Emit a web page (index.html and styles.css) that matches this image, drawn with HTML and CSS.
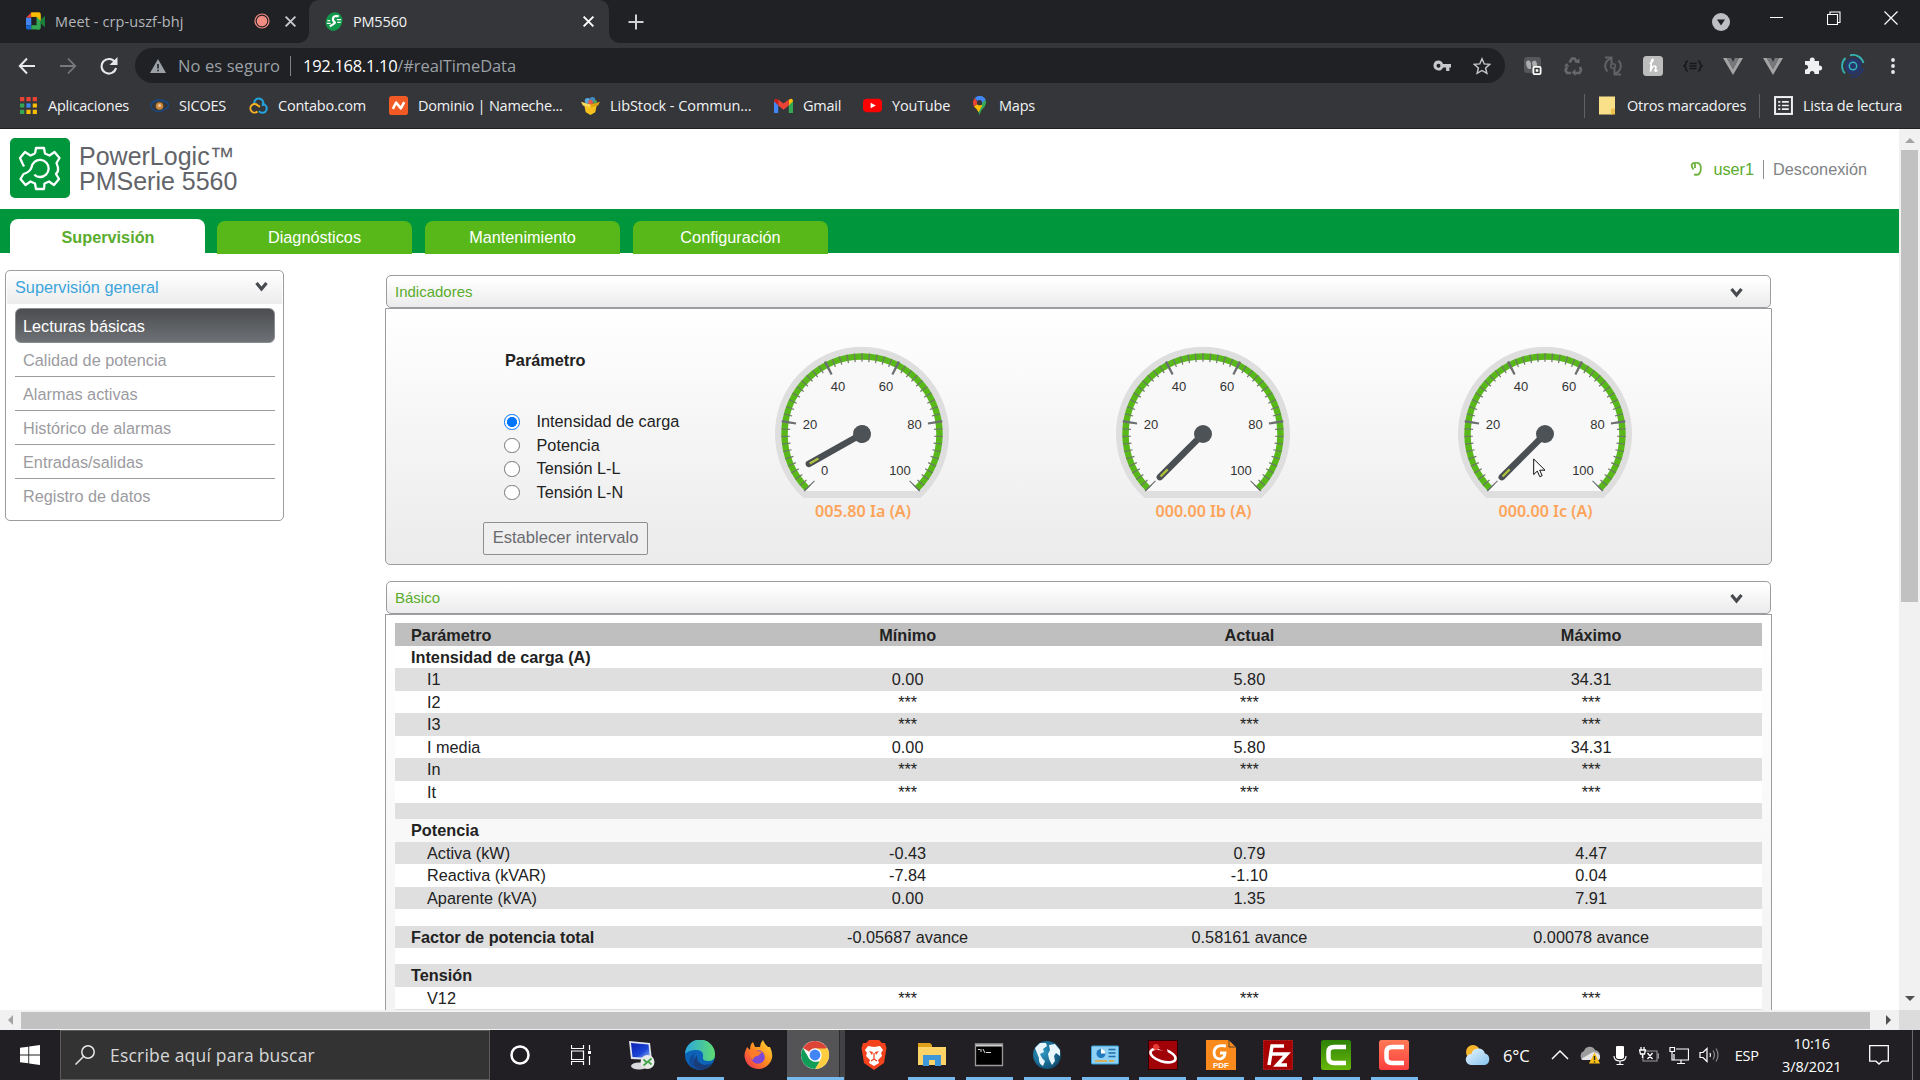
FILE: index.html
```html
<!DOCTYPE html>
<html lang="es">
<head>
<meta charset="utf-8">
<title>PM5560</title>
<link rel="stylesheet" href="styles.css">
</head>
<body>
<svg class="defs" aria-hidden="true">
  <defs>
    <linearGradient id="edgeA" x1="0" y1="0" x2="1" y2="0"><stop offset="0" stop-color="#2aa5e0"/><stop offset="1" stop-color="#5fdc70"/></linearGradient>
    <linearGradient id="fire" x1="1" y1="0" x2="0" y2="1"><stop offset="0" stop-color="#ffe23a"/><stop offset=".5" stop-color="#ff8a1e"/><stop offset="1" stop-color="#f0285a"/></linearGradient>
    <linearGradient id="cloudG" x1="0" y1="0" x2="1" y2="1"><stop offset="0" stop-color="#e8f5ff"/><stop offset="1" stop-color="#86c3ee"/></linearGradient>
    <radialGradient id="globeG" cx=".35" cy=".4" r=".8"><stop offset="0" stop-color="#2d9ac4"/><stop offset="1" stop-color="#0a3f63"/></radialGradient>
    <linearGradient id="camG" x1="0" y1="0" x2="0" y2="1"><stop offset="0" stop-color="#2e8207"/><stop offset="1" stop-color="#68b80a"/></linearGradient>
    <linearGradient id="camR" x1="0" y1="0" x2="0" y2="1"><stop offset="0" stop-color="#ff7a55"/><stop offset="1" stop-color="#fb3f3f"/></linearGradient>
    <linearGradient id="screenG" x1="0" y1="0" x2="1" y2="1"><stop offset="0" stop-color="#0a1fb0"/><stop offset=".6" stop-color="#1a46d8"/><stop offset="1" stop-color="#9db8f5"/></linearGradient>
    <symbol id="dial" viewBox="-90 -90 180 160" overflow="visible">
      <path d="M-58.500 63.500 H58.500 A86.500 86.500 0 1 0 -58.500 63.500 Z" fill="#dedede" stroke="#dedede" stroke-width="1"/>
      <path d="M-57 57 A80.500 80.500 0 1 1 57 57 Z" fill="#f8f8f8"/>
      <path d="M-54.800 54.800 A77.500 77.500 0 1 1 54.800 54.800" fill="none" stroke="#58b81a" stroke-width="6.500"/>
      <path d="M-54 54 A76.400 76.400 0 1 1 54 54" pathLength="50" fill="none" stroke="#6f7a68" stroke-width="8.500" stroke-dasharray=".18 .82" stroke-dashoffset=".09"/>
      <path d="M-52.300 52.300 A74 74 0 1 1 52.300 52.300" pathLength="500" fill="none" stroke="#6d7072" stroke-width="14.500" stroke-dasharray="3.400 96.600" stroke-dashoffset="1.700"/>
      <g class="dial-num">
        <text x="-24" y="-43.500">40</text><text x="24" y="-43.500">60</text>
        <text x="-52" y="-5">20</text><text x="52.500" y="-5">80</text>
        <text x="38" y="41">100</text>
      </g>
    </symbol>
    <symbol id="needle" viewBox="-90 -90 180 160" overflow="visible">
      <path d="M0 0 V61" stroke="#4a4f54" stroke-width="6.500" stroke-linecap="round"/>
      <path d="M0 50 V60" stroke="#b0c43c" stroke-width="2.200"/>
      <circle r="9" fill="#4d5257"/>
    </symbol>
    <symbol id="chev" viewBox="0 0 14 10"><path d="M2 1 L7 7 L12 1" fill="none" stroke="#474a4f" stroke-width="3.200"/></symbol>
  </defs>
</svg>

<header class="chrome">
  <div class="tabstrip">
    <div class="tab">
      <svg class="fav" viewBox="0 0 19 17"><path d="M5 0h8v4H5z" fill="#fbbc04"/><path d="M5 0v5H0z" fill="#ea4335"/><path d="M0 5h5v7H0z" fill="#4285f4"/><path d="M0 12h5v4H1.500Q0 16 0 14.500z" fill="#1967d2"/><path d="M5 12h8v4H5z" fill="#34a853"/><path d="M10 2h2.500Q14 2 14 3.500v11Q14 16 12.500 16H10z" fill="#34a853"/><path d="M5 0h7.500Q14 0 14 1.500V8l-4-4H5z" fill="#fbbc04"/><path d="M14 6.500 18 3v11l-4-3.500z" fill="#188038"/></svg>
      <span class="tab-title muted">Meet - crp-uszf-bhj</span>
      <svg class="rec" viewBox="0 0 16 16"><circle cx="8" cy="8" r="7" fill="none" stroke="#f28b82" stroke-width="1.200"/><circle cx="8" cy="8" r="5.300" fill="#f28b82"/></svg>
      <svg class="x" viewBox="0 0 12 12"><path d="M1.500 1.500l9 9M10.500 1.500l-9 9" stroke="#c4c7cb" stroke-width="1.800"/></svg>
    </div>
    <div class="tab active">
      <svg class="fav" viewBox="0 0 20 20"><ellipse cx="10" cy="10" rx="8.600" ry="10" transform="rotate(24 10 10)" fill="#12984a"/><path d="M15 4.500Q9.500 3.500 9 6.500T10.500 10.500 5.500 15" fill="none" stroke="#fff" stroke-width="2.300"/><path d="M17.500 8H13M17 11h-3.500M3 9h3M2.500 12h4" fill="none" stroke="#fff" stroke-width="1.400"/></svg>
      <span class="tab-title">PM5560</span>
      <svg class="x" viewBox="0 0 12 12"><path d="M1.500 1.500l9 9M10.500 1.500l-9 9" stroke="#fff" stroke-width="1.800"/></svg>
    </div>
    <svg class="plus" viewBox="0 0 16 16"><path d="M8 .5v15M.5 8h15" stroke="#d0d2d5" stroke-width="2"/></svg>
    <div class="win">
      <svg viewBox="0 0 18 18" width="18" height="18"><circle cx="9" cy="9" r="9" fill="#bcbec4"/><path d="M5 6.500h8L9 12.500z" fill="#202124"/></svg>
      <svg viewBox="0 0 14 14" width="14" height="14"><path d="M0 6.500h13" stroke="#fff" stroke-width="1"/></svg>
      <svg viewBox="0 0 14 14" width="14" height="14"><path d="M.5 3.500h10v10H.5zM3 3.500V1h10v10.500h-2.500" fill="none" stroke="#fff" stroke-width="1.100"/></svg>
      <svg viewBox="0 0 14 14" width="14" height="14"><path d="M.5.5l13 13M13.500.5l-13 13" stroke="#fff" stroke-width="1.200"/></svg>
    </div>
  </div>
  <div class="toolbar">
    <div class="nav">
      <svg viewBox="0 0 18 18" width="18" height="18"><path d="M17 9H2M9 1.500 1.800 9 9 16.500" fill="none" stroke="#e6e8eb" stroke-width="2"/></svg>
      <svg viewBox="0 0 18 18" width="18" height="18"><path d="M1 9h15M9 1.500 16.200 9 9 16.500" fill="none" stroke="#77797d" stroke-width="1.800"/></svg>
      <svg viewBox="0 0 18 18" width="18" height="18"><path d="M15 5.200A7.300 7.300 0 1 0 16 11" fill="none" stroke="#e6e8eb" stroke-width="2.100"/><path d="M17.500 0v8h-8z" fill="#e6e8eb"/></svg>
    </div>
    <div class="omni">
      <svg viewBox="0 0 16 14" width="16" height="14"><path d="M8 0l8 14H0z" fill="#9aa0a6"/><path d="M8 5v4.500M8 10.700v1.600" stroke="#202124" stroke-width="1.600"/></svg>
      <span class="unsafe">No es seguro</span>
      <span class="url"><b>192.168.1.10</b>/#realTimeData</span>
      <svg class="key" viewBox="0 0 18 12" width="18" height="12"><path d="M5.500.5a5 5 0 1 0 4.600 7h3v3.500h3.300V7.500H18V4H10A5 5 0 0 0 5.500.5zm0 3.200a2 2 0 1 1 0 4 2 2 0 0 1 0-4z" fill="#c6c8cc" fill-rule="evenodd"/></svg>
      <svg viewBox="0 0 20 19" width="18" height="18"><path d="M10 1.500l2.500 5.700 6.200.5-4.700 4 1.400 6L10 14.500 4.600 17.700l1.400-6-4.700-4 6.200-.5z" fill="none" stroke="#c6c8cc" stroke-width="1.600"/></svg>
    </div>
    <div class="exts">
      <svg viewBox="0 0 20 20"><rect x="1" y="1" width="17" height="16" rx="3" fill="#55575b"/><path d="M3 6q3-4 5 1v6q-5 1-5-7M9 6q4-4 5 2v5q-5 0-5-7" fill="#a9abad"/><rect x="9.500" y="10" width="9" height="9" rx="2" fill="#fff"/><path d="M12 12.500h4v4h-4z" fill="none" stroke="#333" stroke-width="1.400"/></svg>
      <svg viewBox="0 0 20 20"><g fill="none" stroke="#66686b" stroke-width="2.600"><path d="M6.500 6.500 9 2.500h2.500L14 6M17 11l1 3-1.500 3H12M8 17H4L2.500 14.500 4 11"/></g><path d="M11 6l5.500 1.500V2.500zM12.500 13v7l-4-3.500zM1 10.500h5.500l-3-3.500z" fill="#66686b"/></svg>
      <svg viewBox="0 0 20 20"><path d="M8 2.500a7.800 7.800 0 0 0-3.500 13M2 1.500h6.500v6M12 17.500a7.800 7.800 0 0 0 3.500-13M18 18.500h-6.500v-6" fill="none" stroke="#606265" stroke-width="2"/><circle cx="10" cy="10" r="2.300" fill="none" stroke="#606265" stroke-width="1.500"/></svg>
      <svg viewBox="0 0 20 20"><rect width="20" height="20" rx="3.500" fill="#bdbdbe"/><path d="M6.500 7.500Q10.500 6 10 3.500 8.500 3 8.300 7L7.500 15.500Q9 10 11.500 10T12 14.500Q12.500 16 14.500 14" fill="none" stroke="#fff" stroke-width="1.700"/></svg>
      <svg viewBox="0 0 20 20"><path d="M5 5q-2 0-2 2t-2 3q2 1 2 3t2 2M15 5q2 0 2 2t2 3q-2 1-2 3t-2 2M6.500 7.500h7M6.500 10h7M6.500 12.500h7" fill="none" stroke="#17181a" stroke-width="1.600"/></svg>
      <svg viewBox="0 0 20 20"><path d="M0 2h4l6 11 6-11h4L10 19z" fill="#a3a3a4"/><path d="M4 2h4l2 4 2-4h4L10 13z" fill="#77787a"/></svg>
      <svg viewBox="0 0 20 20"><path d="M0 2h4l6 11 6-11h4L10 19z" fill="#a3a3a4"/><path d="M4 2h4l2 4 2-4h4L10 13z" fill="#77787a"/></svg>
      <svg viewBox="0 0 20 20"><path d="M2 5h5a2.500 2.500 0 1 1 4.500 0H16v4.500a2.500 2.500 0 1 1 0 4.800V18h-4.600a2.400 2.400 0 1 0-4.600 0H2v-4.500a2.400 2.400 0 1 0 0-4.600z" fill="#eef0f2"/></svg>
      <svg viewBox="0 0 24 24" class="profile"><path d="M16.500 4A9 9 0 0 1 20 14l-7.500-2M20 14A9 9 0 0 1 7 19l5-7" fill="#25356e"/><circle cx="12" cy="12" r="8" fill="#27366d"/><path d="M22 14A10.500 10.500 0 0 1 10 22.500" fill="none" stroke="#27366d" stroke-width="2"/><path d="M4 19.500A11 11 0 0 1 4.500 4M9 1.300A11 11 0 0 1 22.500 9" fill="none" stroke="#35b3b5" stroke-width="1.800"/><circle cx="12" cy="12" r="3.700" fill="none" stroke="#35b3b5" stroke-width="1.500"/></svg>
      <svg viewBox="0 0 20 20"><g fill="#e6e8eb"><circle cx="10" cy="4" r="1.900"/><circle cx="10" cy="10" r="1.900"/><circle cx="10" cy="16" r="1.900"/></g></svg>
    </div>
  </div>
  <nav class="bookmarks">
    <a class="bm bm-apps"><svg viewBox="0 0 18 18"><g><path d="M1 1h4v4H1zM7 1h4v4H7zM13 1h4v4h-4z" fill="#ea4335"/><path d="M1 7h4v4H1zM1 13h4v4H1z" fill="#34a853"/><path d="M7 7h4v4H7z" fill="#4285f4"/><path d="M13 7h4v4h-4zM7 13h4v4H7zM13 13h4v4h-4z" fill="#fbbc04"/></g></svg><span>Aplicaciones</span></a>
    <a class="bm bm-sic"><svg viewBox="0 0 18 18"><path d="M0 10Q3 3 10 4t8 5" fill="none" stroke="#174a86" stroke-width="1.700"/><path d="M1 11q4 5 10 3t7-5" fill="none" stroke="#174a86" stroke-width="1.300"/><circle cx="9" cy="9.500" r="3.600" fill="#c8843a"/><circle cx="9" cy="9" r="1.500" fill="#e9c9a0"/></svg><span>SICOES</span></a>
    <a class="bm bm-con"><svg viewBox="0 0 20 18"><path d="M5.500 7a4.800 4.800 0 1 1 8.500 2.500M13.500 7.500a4.600 4.600 0 1 1-3 7.500" fill="none" stroke="#22a5df" stroke-width="2.100"/><path d="M9 8.700A4.500 4.500 0 1 0 9 15.300M8.500 8.500l3 2" fill="none" stroke="#f7b322" stroke-width="2.100"/></svg><span>Contabo.com</span></a>
    <a class="bm bm-dom"><svg viewBox="0 0 20 20"><rect width="20" height="20" rx="3" fill="#f15a24"/><path d="M4 13.500 7.500 7l5 6L16 6.500" fill="none" stroke="#fff" stroke-width="2.600" stroke-linejoin="round"/></svg><span>Dominio | Nameche...</span></a>
    <a class="bm bm-lib"><svg viewBox="0 0 20 20"><path d="M3 8h14l-2 9-5 3-5-3z" fill="#f6c11c"/><path d="M0 6l10 3v3L2 10z" fill="#ffd95a"/><path d="M20 6L10 9v3l8-2z" fill="#e0a312"/><circle cx="7" cy="5" r="3" fill="#58a9dc"/><circle cx="12" cy="4" r="3" fill="#3f8dc0"/><circle cx="10" cy="6.500" r="2.500" fill="#e35b48"/><circle cx="15" cy="6" r="1.800" fill="#54a656"/></svg><span>LibStock - Commun...</span></a>
    <a class="bm bm-gm"><svg viewBox="0 0 18 14"><path d="M0 2v12h4V5z" fill="#4285f4"/><path d="M18 2v12h-4V5z" fill="#34a853"/><path d="M14 1.500Q18-1 18 3L14 7z" fill="#fbbc04"/><path d="M4 1.500Q0-1 0 3l4 4z" fill="#c5221f"/><path d="M4 1.300 9 5.200l5-3.900V7l-5 4-5-4z" fill="#ea4335"/></svg><span>Gmail</span></a>
    <a class="bm bm-yt"><svg viewBox="0 0 20 14"><rect width="20" height="14" rx="4" fill="#f00"/><path d="M8 4l5.500 3L8 10z" fill="#fff"/></svg><span>YouTube</span></a>
    <a class="bm bm-map"><svg viewBox="0 0 14 20"><path d="M7 0a7 7 0 0 1 6.800 8Q13 12 9 15L7 20 5 14.500 9 9z" fill="#34a853"/><path d="M1 11q4 3 5 6l4-7-5-2z" fill="#fbbc04"/><path d="M.2 6Q0 9 1 11l5-3L2 2Q.6 3.600.2 6z" fill="#ea4335"/><path d="M2 2a7 7 0 0 1 11.500 2L8 9z" fill="#4285f4"/><circle cx="7" cy="7" r="2.700" fill="#35363a"/></svg><span>Maps</span></a>
    <a class="bm bm-right bm-ot"><svg viewBox="0 0 16 18"><path d="M0 0h16v13l-3 5H0z" fill="#fbe08a"/><path d="M12 12h4v6h-4z" fill="#efc24c"/></svg><span>Otros marcadores</span></a>
    <a class="bm bm-right bm-li"><svg viewBox="0 0 18 18"><rect x="1" y="1" width="16" height="16" fill="none" stroke="#eef0f2" stroke-width="1.900"/><path d="M4 5.500h2M4 9h2M4 12.500h2M7.500 5.500H14M7.500 9H14M7.500 12.500H14" stroke="#eef0f2" stroke-width="1.600"/></svg><span>Lista de lectura</span></a>
  </nav>
</header>

<div class="viewport">
  <div class="page">
    <div class="brand">
      <svg class="logo" viewBox="0 0 60 60"><rect width="60" height="60" rx="5" fill="#00963c"/><path d="M25 15.500 26 10h8l1 5.500 4.500 2 5-3.500 5 6-3 5 1.500 4.500V33l-2 3 3 5-5 6-5-3.500-4.500 2L34 51h-8l-1-5.500-4.500-2-5 3.500-5-6 3-5Q20 34 21.500 29.500A8.600 8.600 0 1 1 30 39Q26 39 24.500 36.500M14 28.500l-1.500-3L10 20l5-6 5.500 3.500 4.500-2" fill="none" stroke="#fff" stroke-width="2.300" stroke-linejoin="round"/></svg>
      <div class="brand-name">PowerLogic™<br>PMSerie 5560</div>
      <div class="session">
        <svg viewBox="0 0 12 14" width="12" height="14"><path d="M3.500 7.500Q0 3 3 1.200 9-.5 10.500 3.500 11.500 9 9.500 11.500 7.500 13.500 4 12.300M5 1.500V6" fill="none" stroke="#6db33f" stroke-width="1.800"/></svg>
        <span class="user">user1</span><span class="logout">Desconexión</span>
      </div>
    </div>
    <nav class="tabs"><a class="on">Supervisión</a><a>Diagnósticos</a><a>Mantenimiento</a><a>Configuración</a></nav>
    <div class="content">
      <aside class="side">
        <h2>Supervisión general <svg width="15" height="10"><use href="#chev"/></svg></h2>
        <ul><li class="sel">Lecturas básicas</li><li>Calidad de potencia</li><li>Alarmas activas</li><li>Histórico de alarmas</li><li>Entradas/salidas</li><li>Registro de datos</li></ul>
      </aside>
      <main class="main">
        <h3 class="ph">Indicadores <svg width="15" height="10"><use href="#chev"/></svg></h3>
        <section class="gauges">
          <form class="params">
            <strong>Parámetro</strong>
            <label><i class="radio checked"></i>Intensidad de carga</label>
            <label><i class="radio"></i>Potencia</label>
            <label><i class="radio"></i>Tensión L-L</label>
            <label><i class="radio"></i>Tensión L-N</label>
            <button type="button">Establecer intervalo</button>
          </form>
          <svg class="gauge" viewBox="-90 -90 180 180"><use href="#dial" x="-90" y="-90" width="180" height="160"/><text class="dial-num" x="-37.500" y="41">0</text><g transform="rotate(60.600)"><use href="#needle" x="-90" y="-90" width="180" height="160"/></g><text class="val" x="1" y="83" textLength="96" lengthAdjust="spacingAndGlyphs">005.80 Ia (A)</text></svg>
          <svg class="gauge" viewBox="-90 -90 180 180"><use href="#dial" x="-90" y="-90" width="180" height="160"/><g transform="rotate(45)"><use href="#needle" x="-90" y="-90" width="180" height="160"/></g><text class="val" x=".5" y="83" textLength="96" lengthAdjust="spacingAndGlyphs">000.00 Ib (A)</text></svg>
          <svg class="gauge" viewBox="-90 -90 180 180"><use href="#dial" x="-90" y="-90" width="180" height="160"/><g transform="rotate(45)"><use href="#needle" x="-90" y="-90" width="180" height="160"/></g><text class="val" x=".5" y="83" textLength="94" lengthAdjust="spacingAndGlyphs">000.00 Ic (A)</text></svg>
        </section>
        <h3 class="ph second">Básico <svg width="15" height="10"><use href="#chev"/></svg></h3>
        <section class="basic">
          <div class="table">
            <div class="row head"><b>Parámetro</b><b>Mínimo</b><b>Actual</b><b>Máximo</b></div>
            <div class="row"><b>Intensidad de carga (A)</b></div>
            <div class="row g"><span>I1</span><span>0.00</span><span>5.80</span><span>34.31</span></div>
            <div class="row"><span>I2</span><span>***</span><span>***</span><span>***</span></div>
            <div class="row g"><span>I3</span><span>***</span><span>***</span><span>***</span></div>
            <div class="row"><span>I media</span><span>0.00</span><span>5.80</span><span>34.31</span></div>
            <div class="row g"><span>In</span><span>***</span><span>***</span><span>***</span></div>
            <div class="row"><span>It</span><span>***</span><span>***</span><span>***</span></div>
            <div class="row gap g"></div>
            <div class="row pale"><b>Potencia</b></div>
            <div class="row g"><span>Activa (kW)</span><span>-0.43</span><span>0.79</span><span>4.47</span></div>
            <div class="row"><span>Reactiva (kVAR)</span><span>-7.84</span><span>-1.10</span><span>0.04</span></div>
            <div class="row g"><span>Aparente (kVA)</span><span>0.00</span><span>1.35</span><span>7.91</span></div>
            <div class="row gap"></div>
            <div class="row g"><b>Factor de potencia total</b><span>-0.05687 avance</span><span>0.58161 avance</span><span>0.00078 avance</span></div>
            <div class="row gap"></div>
            <div class="row g"><b>Tensión</b></div>
            <div class="row"><span>V12</span><span>***</span><span>***</span><span>***</span></div>
            <div class="row g"></div>
          </div>
        </section>
      </main>
    </div>
  </div>
  <div class="vbar"><i class="up"></i><div class="vthumb"></div><i class="down"></i></div>
  <div class="hbar"><i class="left"></i><div class="hthumb"></div><i class="right"></i></div>
  <div class="corner"></div>
</div>

<footer class="taskbar">
  <div class="start"><svg viewBox="0 0 20 20" width="20" height="20"><path d="M0 2.800 8.300 1.700v7.800H0zM9.200 1.500 20 0v9.500H9.200zM0 10.400h8.300v7.900L0 17.200zM9.200 10.400H20V20L9.200 18.500z" fill="#fff"/></svg></div>
  <div class="search"><svg viewBox="0 0 20 20" width="20" height="20"><circle cx="13" cy="7" r="6.200" fill="none" stroke="#e8e8e8" stroke-width="1.500"/><path d="M8.500 11.500.5 19.500" stroke="#e8e8e8" stroke-width="1.500"/></svg><span>Escribe aquí para buscar</span></div>
  <div class="apps">
    <div class="app wide"><svg viewBox="0 0 20 20" width="20" height="20"><circle cx="10" cy="10" r="8.500" fill="none" stroke="#fff" stroke-width="2.500"/></svg></div>
    <div class="app wide"><svg viewBox="0 0 20 20" width="20" height="20"><path d="M.5 0v3.500h12V0M.5 20v-3.500h12V20M.5 6h12v8.500H.5zM18.500 0v5M18.500 11v9" fill="none" stroke="#fff" stroke-width="1.200"/><path d="M17 6h3v3h-3z" fill="#fff"/></svg></div>
    <div class="app wide"><svg viewBox="0 0 30 30"><path d="M3 1l21 2 2 17L5 19z" fill="#dfe6f2"/><path d="M5 3l17.500 1.500L24 18 6.500 17z" fill="url(#screenG)"/><ellipse cx="13" cy="26" rx="8" ry="3.500" fill="#d8dadd"/><circle cx="21.500" cy="22" r="7" fill="#e8eae8"/><path d="M17.500 19.500l3.500 3-3.500 3M25.500 18.500l-3.500 3 3.500 3" fill="none" stroke="#3fa447" stroke-width="1.700"/></svg></div>
    <div class="app run"><svg viewBox="0 0 30 30"><circle cx="15" cy="15" r="15" fill="#0c63b8"/><path d="M0 14A15 15 0 0 1 30 15q0 6-7 6-6 0-5-4 1-7-7-7Q4 10 0 14z" fill="url(#edgeA)"/><path d="M10 13q-3 6 1.500 11T24 26.500Q19 30 13 29.800 2 27 5 17z" fill="#134b9a"/><path d="M12 15q-1 8 7 10 5 0 8-2-7 9-14 6-8-5-1-14z" fill="#1a3c78"/></svg></div>
    <div class="app"><svg viewBox="0 0 30 30"><path d="M15 29A13.500 13.500 0 0 1 2 12L4 7l3 3q0-6 3-8l2 5 5 0Q17 3 20 0q2 5 5 7l2 0q3 6 2 11a14 14 0 0 1-14 11z" fill="url(#fire)"/><circle cx="15" cy="17" r="6.800" fill="#7c48d6"/><path d="M7 10q4-2 8 1l4 1-4 4q-4 0-5 4-5-5-3-10z" fill="#ff7a29"/></svg></div>
    <div class="app run current"><svg viewBox="0 0 30 30"><circle cx="15" cy="15" r="14" fill="#fff"/><path d="M15 15 2.900 8A14 14 0 0 1 27.100 8z" fill="#db4437"/><path d="M27.500 8.500A14 14 0 0 1 15 29l6-10.500L15 8.500z" fill="#ffcd40"/><path d="M2.900 8l6.500 11L15 21.500h4.500L15 29A14 14 0 0 1 2.900 8z" fill="#0f9d58"/><circle cx="15" cy="15" r="6.700" fill="#fff"/><circle cx="15" cy="15" r="5.400" fill="#4285f4"/></svg></div>
    <div class="app"><svg viewBox="0 0 26 30" width="26" height="30"><path d="M5 3 8 0h10l3 3 3 0 1.500 5-2.500 15-10 7-10-7L.5 8 2 3z" fill="#f4421c"/><path d="M7 6l6 1 6-1 3 4-2 3 1 3-4 4 1 3-5 3-5-3 1-3-4-4 1-3-2-3z" fill="#fff"/><path d="M8 11l4 1-1 3zM18 11l-4 1 1 3z" fill="#f4421c"/><path d="M13 13v6M10 21l3-2 3 2" fill="none" stroke="#f4421c" stroke-width="1.200"/></svg></div>
    <div class="app run"><svg viewBox="0 0 30 30"><path d="M1 3h12l2 2v5H1z" fill="#dda01b"/><path d="M1 7h28v18H1z" fill="#fbd367"/><path d="M6 26V15h18v11h-6v-6h-6v6z" fill="#3e97d8"/></svg></div>
    <div class="app run"><svg viewBox="0 0 30 30"><path d="M1.500 4h27v21.500h-27z" fill="#000" stroke="#9a9a9a" stroke-width="1.300"/><path d="M2 4.500h26v2H2z" fill="#cfcfcf"/><path d="M4 9.500h2M7 9v3M9 9l2 4M12 12.500h5" stroke="#ddd" stroke-width="1"/></svg></div>
    <div class="app run"><svg viewBox="0 0 30 30"><circle cx="15" cy="15" r="14" fill="url(#globeG)"/><path d="M3 8l5-5 6 0 1 3-4 3 1 3-4 2 2 4 3 3-2 5q-5-3-4-8zM17 5l6-1 5 6 0 6-4-3-2 3 1 5-3 4-3-6-1-5 2-4z" fill="#e8f6fb"/></svg></div>
    <div class="app run"><svg viewBox="0 0 30 30"><rect x="1.500" y="6" width="27" height="18" rx="1" fill="#8fd0f5" stroke="#37a0da"/><circle cx="11" cy="13.500" r="4.500" fill="#2379be"/><path d="M11 13.500V9a4.500 4.500 0 0 1 4.500 4.500z" fill="#fff"/><path d="M18.500 9.500h7M18.500 13h7M18.500 16.500h7" stroke="#1d6ead" stroke-width="1.700"/><path d="M5 21h12M19 21h5" stroke="#eaa52e" stroke-width="1.300"/></svg></div>
    <div class="app run"><svg viewBox="0 0 30 30"><path d="M.5.5h29v29H.5z" fill="#a00208" stroke="#2d0002"/><ellipse cx="15" cy="15.500" rx="13" ry="6" transform="rotate(17 15 15.500)" fill="none" stroke="#fff" stroke-width="2.600"/><path d="M8 8l12 5-2-7z" fill="#a00208"/><circle cx="8" cy="7" r="3" fill="#ea3b35"/></svg></div>
    <div class="app run"><svg viewBox="0 0 30 30"><path d="M0 0h22l8 7v23H0z" fill="#fb8a1c"/><path d="M23 0v7h7z" fill="#fb8a1c" stroke="#333" stroke-width=".8"/><path d="M20 6Q9 4 8 12q0 7 6 7 5-1 5-6h-5" fill="none" stroke="#fff" stroke-width="2.800"/><text x="15" y="27.500" class="pdf">PDF</text></svg></div>
    <div class="app run"><svg viewBox="0 0 30 30"><path d="M.5.500h29v29H.5z" fill="#a80000" stroke="#c42020" stroke-dasharray="2 1"/><path d="M6 25 9 6h12M8 14h8M14 14h10L14 25h10" fill="none" stroke="#fff" stroke-width="3.500"/></svg></div>
    <div class="app run"><svg viewBox="0 0 30 30"><rect width="30" height="30" rx="2.500" fill="url(#camG)"/><path d="M25 7H13Q7.500 7 7.500 12v6q0 5 5.500 5h12" fill="none" stroke="#fff" stroke-width="4.500"/></svg></div>
    <div class="app run"><svg viewBox="0 0 30 30"><rect width="30" height="30" rx="2.500" fill="url(#camR)"/><path d="M25 7H13Q7.500 7 7.500 12v6q0 5 5.500 5h12" fill="none" stroke="#fff" stroke-width="4.500"/></svg></div>
  </div>
  <div class="tray">
    <svg class="weather" viewBox="0 0 26 20"><circle cx="8" cy="7" r="7" fill="#f8b62c"/><path d="M6 20a5.500 5.500 0 0 1 .5-11A7 7 0 0 1 20 8.500 6 6 0 0 1 20 20z" fill="url(#cloudG)"/></svg>
    <span class="temp">6°C</span>
    <svg class="t" viewBox="0 0 20 20"><path d="M2 14l8-8 8 8" fill="none" stroke="#fff" stroke-width="1.500"/></svg>
    <svg class="t" viewBox="0 0 20 20"><path d="M3 15a5 5 0 0 1 1-9 6 6 0 0 1 11-1q5 1 5 6l-3 4z" fill="#9d9d9d"/><path d="M1 14 13 7q7 1 7 5t-4 3H3z" fill="#e6e6e6"/><path d="M14.500 7.500 20 18.500H9z" fill="#fcbf16"/><path d="M14.500 11v4M14.500 16.200v1.300" stroke="#222" stroke-width="1.400"/></svg>
    <svg class="t" viewBox="0 0 20 20"><path d="M6 2q0-1 1-1h6q1 0 1 1v10q0 2-4 2t-4-2z" fill="#fff"/><path d="M4 11q0 5 6 5t6-5M10 16v3M6.500 19.500h7" fill="none" stroke="#fff" stroke-width="1.200"/></svg>
    <svg class="t" viewBox="0 0 20 20"><path d="M5 6h13v10H4v-6M18.500 9h1v4h-1" fill="none" stroke="#999" stroke-width="1.100"/><path d="M2 2v3M5 2v3M.5 5h6l-1 4h-4zM3.500 9v4M8.500 8l5 6M13.500 8l-5 6" fill="none" stroke="#fff" stroke-width="1.300"/></svg>
    <svg class="t" viewBox="0 0 20 20"><path d="M7 4h12.500v11H5V9M12 15v3M8 18.500h8M1 2.500h4.500v4H1zM3 6.500V15h2" fill="none" stroke="#fff" stroke-width="1.200"/></svg>
    <svg class="t" viewBox="0 0 20 20"><path d="M1 7.500h3l4-4v13l-4-4H1z" fill="none" stroke="#fff" stroke-width="1.200"/><path d="M11 8q1 2 0 4" fill="none" stroke="#fff" stroke-width="1.200"/><path d="M14 5.500q3 4.500 0 9M17 3.500q4 6.500 0 13" fill="none" stroke="#888" stroke-width="1.200"/></svg>
    <span class="lang">ESP</span>
    <span class="clock">10:16<br>3/8/2021</span>
    <svg class="note" viewBox="0 0 20 20" width="20" height="20"><path d="M.7.700h18.600v15.500H13L10 19l-3-2.800H.7z" fill="none" stroke="#fff" stroke-width="1.300"/></svg>
  </div>
</footer>
<svg class="cursor" viewBox="0 0 13 20" width="13" height="20"><path d="M.7 1v15.500l3.600-3.400 2.500 5.600 2.400-1-2.500-5.500H12z" fill="#fff" stroke="#111" stroke-width="1"/></svg>
</body>
</html>
```
FILE: styles.css
```css
* { box-sizing: border-box; }
html, body { margin: 0; height: 1080px; overflow: hidden; }
body { display: flex; flex-direction: column; width: 1920px; background: #fff; font: 16.25px "Liberation Sans", Arial, sans-serif; color: #222; position: relative; }
svg { display: block; flex: none; }
.defs { position: absolute; width: 0; height: 0; }

/* Browser frame */
.chrome { height: 129px; flex: none; background: #35363a; border-bottom: 1px solid #202124; font-family: "Open Sans", "Noto Sans", sans-serif; color: #f1f3f4; }
.tabstrip { height: 43px; background: #202124; display: flex; align-items: center; }
.tab { width: 309px; height: 43px; padding: 0 12px 1px 26px; display: flex; align-items: center; }
.tab.active { width: 300px; background: #35363a; border-radius: 10px 10px 0 0; padding: 0 14px 1px 15px; position: relative; }
.tab.active::before, .tab.active::after { content: ""; position: absolute; bottom: 0; width: 10px; height: 10px; }
.tab.active::before { left: -10px; background: radial-gradient(circle at 0 0, #202124 9.500px, #35363a 10px); }
.tab.active::after { right: -10px; background: radial-gradient(circle at 100% 0, #202124 9.500px, #35363a 10px); }
.fav { width: 20px; height: 19px; margin-right: 10px; }
.tab-title { flex: 1; font-size: 14.500px; letter-spacing: -.2px; white-space: nowrap; }
.muted { color: #b4b7bb; letter-spacing: .1px; }
.tab .fav + .tab-title { margin-left: -1px; }
.rec { width: 16px; height: 16px; margin-right: 14px; }
.x { width: 13px; height: 13px; }
.plus { width: 16px; height: 16px; margin-left: 19px; }
.win { margin-left: auto; display: flex; align-items: center; height: 43px; padding-right: 22px; gap: 43px; }
.win svg:not(:first-child) { margin-top: -7px; }
.win svg:first-child { margin-right: -3px; }
.toolbar { height: 45px; display: flex; align-items: center; }
.nav { display: flex; gap: 23px; padding-left: 18px; width: 135px; }
.omni { width: 1370px; height: 35px; border-radius: 18px; background: #202124; display: flex; align-items: center; padding: 0 14px 0 15px; font-size: 16.500px; }
.unsafe { color: #9aa0a6; margin-left: 12px; width: 113px; border-right: 1px solid #808388; line-height: 20px; letter-spacing: .1px; white-space: nowrap; }
.url { margin-left: 12px; color: #9aa0a6; letter-spacing: -.1px; flex: 1; }
.url b { font-weight: 400; color: #fff; letter-spacing: -.3px; }
.key { margin-right: 22px; }
.exts { display: flex; align-items: center; gap: 20px; margin-left: 18px; }
.exts svg { width: 20px; height: 20px; }
.exts .profile { width: 24px; height: 24px; margin: 0 -2px; }
.bookmarks { height: 35px; display: flex; align-items: center; font-size: 14.500px; letter-spacing: -.22px; padding-left: 19px; }
.bm { display: flex; align-items: center; white-space: nowrap; }
.bm svg { width: 19px; height: 19px; margin-right: 10px; }
.bm-apps { width: 131px; }
.bm-sic { width: 99px; }
.bm-con { width: 140px; }
.bm-dom { width: 192px; }
.bm-lib { width: 193px; letter-spacing: -.05px; }
.bm-gm { width: 89px; }
.bm-yt { width: 107px; }
.bm.bm-right { height: 24px; border-left: 1px solid #606266; padding-left: 14px; }
.bm-ot { width: 175px; margin-left: auto; }
.bm-ot svg { width: 16px; margin-right: 12px; }
.bm-li { width: 161px; }

/* Scrolled document area */
.viewport { height: 901px; flex: none; display: grid; grid-template: 881px 20px / 1899px 21px; background: #f1f1f1; }
.page { overflow: hidden; background: #fff; }
.vbar { display: flex; flex-direction: column; align-items: center; padding: 9px 0 9px; }
.vthumb { width: 17px; height: 452px; background: #c1c1c1; margin: 7px 0 auto; }
.hbar { display: flex; align-items: center; padding: 0 8px 0 8px; }
.hthumb { width: 1849px; height: 17px; background: #c1c1c1; margin: 0 auto 0 8px; }
.corner { background: #dcdcdc; }
.vbar i, .hbar i { border: 5px solid transparent; width: 0; height: 0; flex: none; }
.vbar .up { border-top: 0; border-bottom-color: #a3a3a3; }
.vbar .down { border-bottom: 0; border-top-color: #505050; }
.hbar .left { border-left: 0; border-right-color: #a3a3a3; }
.hbar .right { border-right: 0; border-left-color: #505050; }

.brand { height: 80px; display: flex; padding: 9px 32px 0 10px; }
.logo { width: 60px; height: 60px; }
.brand-name { margin: 6px 0 0 9px; font-size: 25px; line-height: 25px; color: #626469; }
.session { margin-left: auto; display: flex; align-items: center; height: 62px; }
.user { color: #5aac2d; margin-left: 11px; padding-right: 9px; border-right: 1px solid #8e8e8e; }
.logout { color: #808285; padding-left: 9px; }
.tabs { height: 44px; background: #00963c; display: flex; gap: 13px; padding: 10px 10px 0; align-items: flex-start; }
.tabs a { width: 195px; height: 33px; margin-top: 2px; border-radius: 8px 8px 0 0; background: #58b81a; color: #fff; text-align: center; line-height: 33px; }
.tabs a.on { height: 34px; margin-top: 0; background: #fff; color: #5aac2d; font-weight: 700; line-height: 37px; margin-right: -1px; padding-left: 1px; }
.content { display: flex; align-items: flex-start; }
.side { width: 279px; height: 251px; margin: 17px 0 0 5px; border: 1px solid #9b9ba0; border-radius: 5px; padding: 1px; }
.side h2 { margin: 0; height: 32px; display: flex; justify-content: space-between; align-items: center; padding: 0 13px 2px 8px; background: linear-gradient(#fff, #ececec); font-size: 16.250px; font-weight: 400; color: #3ca5dc; }
.side ul { list-style: none; margin: 4px 7px 0 8px; padding: 0; }
.side li { height: 34px; border-bottom: 1px solid #9b9ba0; padding-left: 8px; line-height: 34px; color: #9b9b9f; }
.side li.sel { height: 35px; border: 1px solid #8b8d90; border-radius: 6px; background: linear-gradient(#4b4d50, #6e7175); color: #fff; padding-left: 7px; }
.side li:last-child { border: 0; }
.main { width: 1387px; margin: 22px 0 0 101px; }
.ph { margin: 0 1px; height: 33px; border: 1px solid #9b9ba0; border-radius: 5px; background: linear-gradient(#fff 10%, #ebebeb); display: flex; align-items: center; justify-content: space-between; padding: 0 26px 0 8px; font-size: 15px; font-weight: 400; color: #5aac2d; }
.second { margin-top: 16px; }
.ph svg { margin-top: 2px; }
.gauges { height: 257px; border: 1px solid #9b9ba0; border-radius: 0 0 5px 5px; background: linear-gradient(#fff, #ebebeb); display: grid; grid-template-columns: 305px repeat(3, 341.600px); }
.params { padding: 41px 0 0 118px; display: flex; flex-direction: column; align-items: flex-start; }
.params strong { height: 60px; line-height: 20px; margin-left: 1px; }
.params label { height: 23.500px; display: flex; align-items: center; white-space: nowrap; }
.radio { width: 15.500px; height: 15.500px; border: 1.200px solid #767676; border-radius: 50%; background: #fff; margin: 0 17px 0 0; }
.radio.checked { border-color: #0075ff; background: radial-gradient(#0075ff 4.800px, #fff 5.300px); }
.params button { width: 165px; height: 33px; margin: 18px 0 0 -21px; padding: 0 0 2px; border: 1px solid #8f8f93; border-radius: 2px; background: #efefef; font: 16.600px "Liberation Sans", Arial, sans-serif; color: #6b6b6f; white-space: nowrap; }
.gauge { width: 180px; height: 180px; margin-top: 35px; justify-self: center; }
.dial-num { font: 13px "Liberation Sans", Arial, sans-serif; fill: #333; text-anchor: middle; }
.val { font: 600 16px "Noto Sans", sans-serif; fill: #fda45a; text-anchor: middle; }
.basic { height: 600px; border: 1px solid #9b9ba0; padding: 8px 9px; background: linear-gradient(#fff, #f3f3f3 400px); }
.row { display: grid; grid-template-columns: repeat(4, 1fr); height: 22.500px; line-height: 23px; background: #fff; text-align: center; white-space: nowrap; }
.row.g { background: #dfdfdf; }
.row.head { background: #bfbfbf; line-height: 24px; }
.row.pale { background: #f8f8f8; }
.row.gap { height: 16.250px; }
.row > :first-child { text-align: left; padding-left: 32px; }
.row > b:first-child { padding-left: 16px; }

/* Windows taskbar */
.taskbar { height: 50px; flex: none; background: #211f23; display: flex; color: #fff; font-family: "Open Sans", "Noto Sans", sans-serif; }
.start { width: 60px; display: grid; place-items: center; }
.search { width: 430px; border: 1px solid #5c5c5c; background: #333; display: flex; align-items: center; padding-left: 14px; color: #d8d8d8; font-size: 17.500px; letter-spacing: .2px; }
.search span { margin-left: 15px; }
.apps { display: flex; }
.app { width: 57.800px; display: grid; place-items: center; position: relative; }
.app.wide { width: 60.500px; }
.app svg { width: 30px; height: 30px; }
.app svg[width="20"] { width: 20px; height: 20px; }
.app svg[width="26"] { width: 26px; }
.app.run::after { content: ""; position: absolute; bottom: 0; left: 5.500px; width: 47px; height: 3px; background: #76b9ed; }
.app.current { background: linear-gradient(90deg, #545456 0 52px, #2c2c2e 52px 53px, #434345 53px); }
.app.current svg { margin-right: 2px; }
.app.current::after { left: 0; width: 57px; }
.pdf { font: bold 8px "Liberation Sans", Arial, sans-serif; fill: #fff; text-anchor: middle; }
.tray { margin-left: auto; width: 456px; display: flex; align-items: center; border-right: 0; }
.weather { width: 26px; height: 20px; margin-left: 1px; }
.temp { width: 47px; margin-left: 12px; font-size: 16.500px; letter-spacing: -.1px; }
.t { width: 20px; height: 20px; margin-right: 9.800px; }
.lang { width: 38px; margin-left: 6px; font-size: 14.500px; letter-spacing: -.3px; }
.clock { width: 78px; text-align: center; font-size: 14.500px; line-height: 23px; letter-spacing: -.1px; }
.note { margin-left: 18px; margin-right: 23px; }
.tray::after { content: ""; width: 1px; height: 50px; background: #6a6a6c; }
.cursor { position: absolute; left: 1533px; top: 458px; }
```
